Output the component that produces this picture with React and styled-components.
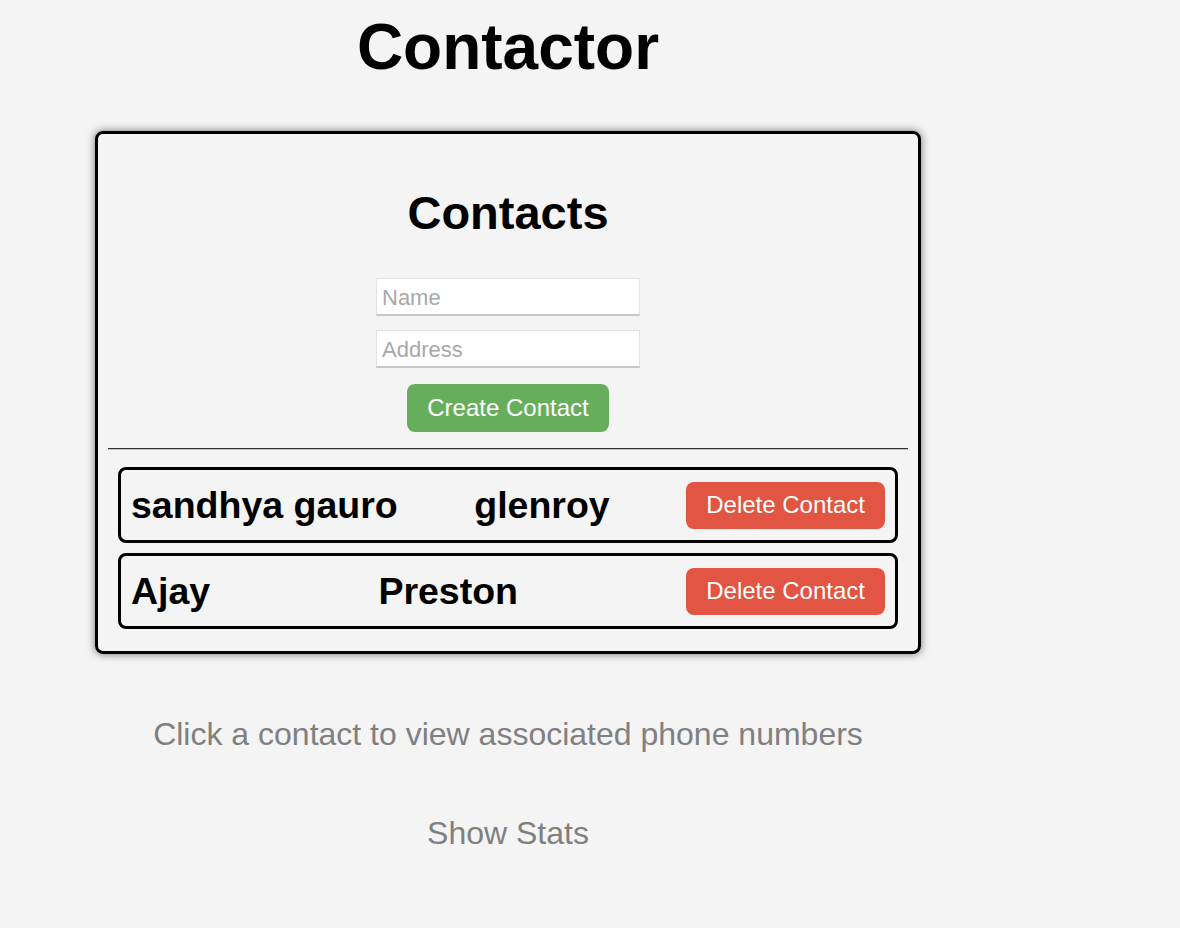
import React, { useState } from 'react';
import styled, { createGlobalStyle } from 'styled-components';

const GlobalStyle = createGlobalStyle`
  body {
    margin: 8px;
    background: #f4f4f4;
    font-family: 'Liberation Sans', Arial, sans-serif;
  }
`;

const Page = styled.div`
  width: 1000px;
  display: flex;
  flex-direction: column;
  align-items: center;
  padding-top: 7px;
  text-align: center;
`;

const Title = styled.h1`
  margin: 0;
  font-size: 64px;
  line-height: 1;
  font-weight: bold;
  color: #000;
`;

const Card = styled.div`
  box-sizing: border-box;
  width: 826px;
  margin-top: 52px;
  padding: 55px 0 22px;
  border: 3px solid #000;
  border-radius: 8px;
  box-shadow: 0 0 8px rgba(0, 0, 0, 0.55);
  display: flex;
  flex-direction: column;
  align-items: center;
`;

const Heading = styled.h2`
  margin: 0;
  font-size: 47px;
  line-height: 1;
  font-weight: bold;
`;

const Form = styled.form`
  display: flex;
  flex-direction: column;
  align-items: center;
  gap: 14px;
  margin-top: 42px;
`;

const Input = styled.input`
  box-sizing: border-box;
  width: 264px;
  height: 38px;
  padding: 2px 5px 0;
  border: 1px solid #e2e2e2;
  border-bottom: 2px solid #c8c8c8;
  background: #fff;
  font-family: inherit;
  font-size: 22px;
  outline: none;

  &::placeholder {
    color: #a8a8a8;
  }
`;

const Button = styled.button`
  box-sizing: border-box;
  height: ${(props) => props.height}px;
  padding: 0 20px;
  border: none;
  border-radius: 8px;
  background: ${(props) => props.color};
  color: #fff;
  font-family: inherit;
  font-size: 24px;
  cursor: pointer;
`;

const SubmitRow = styled.div`
  margin-top: 2px;
`;

const Divider = styled.hr`
  align-self: stretch;
  margin: 16px 10px 17px;
  height: 0;
  border: none;
  border-top: 1px solid #333;
  border-bottom: 1px solid #c4c4c4;
`;

const List = styled.div`
  align-self: stretch;
  display: flex;
  flex-direction: column;
  gap: 10px;
  padding: 0 20px;
`;

const Row = styled.div`
  box-sizing: border-box;
  height: 76px;
  padding: 0 10px;
  border: 3px solid #000;
  border-radius: 8px;
  display: flex;
  align-items: center;
  justify-content: space-between;
  cursor: pointer;
`;

const Name = styled.span`
  font-size: 37.5px;
  font-weight: bold;
  color: #000;
`;

const Hint = styled.p`
  margin: 64px 0 0;
  font-size: 32px;
  line-height: 1;
  color: #808080;
`;

const StatsLink = styled.p`
  margin: 67px 0 0;
  font-size: 32px;
  line-height: 1;
  color: #808080;
  cursor: pointer;
`;

const initialContacts = [
  { id: 1, name: 'sandhya gauro', address: 'glenroy' },
  { id: 2, name: 'Ajay', address: 'Preston' },
];

const App = () => {
  const [contacts, setContacts] = useState(initialContacts);
  const [name, setName] = useState('');
  const [address, setAddress] = useState('');

  return (
    <Page>
      <GlobalStyle />
      <Title>Contactor</Title>
      <Card>
        <Heading>Contacts</Heading>
        <Form
          onSubmit={(e) => {
            e.preventDefault();
            if (!name) return;
            setContacts([...contacts, { id: Date.now(), name, address }]);
            setName('');
            setAddress('');
          }}
        >
          <Input
            placeholder="Name"
            value={name}
            onChange={(e) => setName(e.target.value)}
          />
          <Input
            placeholder="Address"
            value={address}
            onChange={(e) => setAddress(e.target.value)}
          />
          <SubmitRow>
            <Button type="submit" color="#67ae5c" height={48}>
              Create Contact
            </Button>
          </SubmitRow>
        </Form>
        <Divider />
        <List>
          {contacts.map((c) => (
            <Row key={c.id}>
              <Name>{c.name}</Name>
              <Name>{c.address}</Name>
              <Button
                type="button"
                color="#e15542"
                height={47}
                onClick={() =>
                  setContacts(contacts.filter((x) => x.id !== c.id))
                }
              >
                Delete Contact
              </Button>
            </Row>
          ))}
        </List>
      </Card>
      <Hint>Click a contact to view associated phone numbers</Hint>
      <StatsLink>Show Stats</StatsLink>
    </Page>
  );
};

export default App;
